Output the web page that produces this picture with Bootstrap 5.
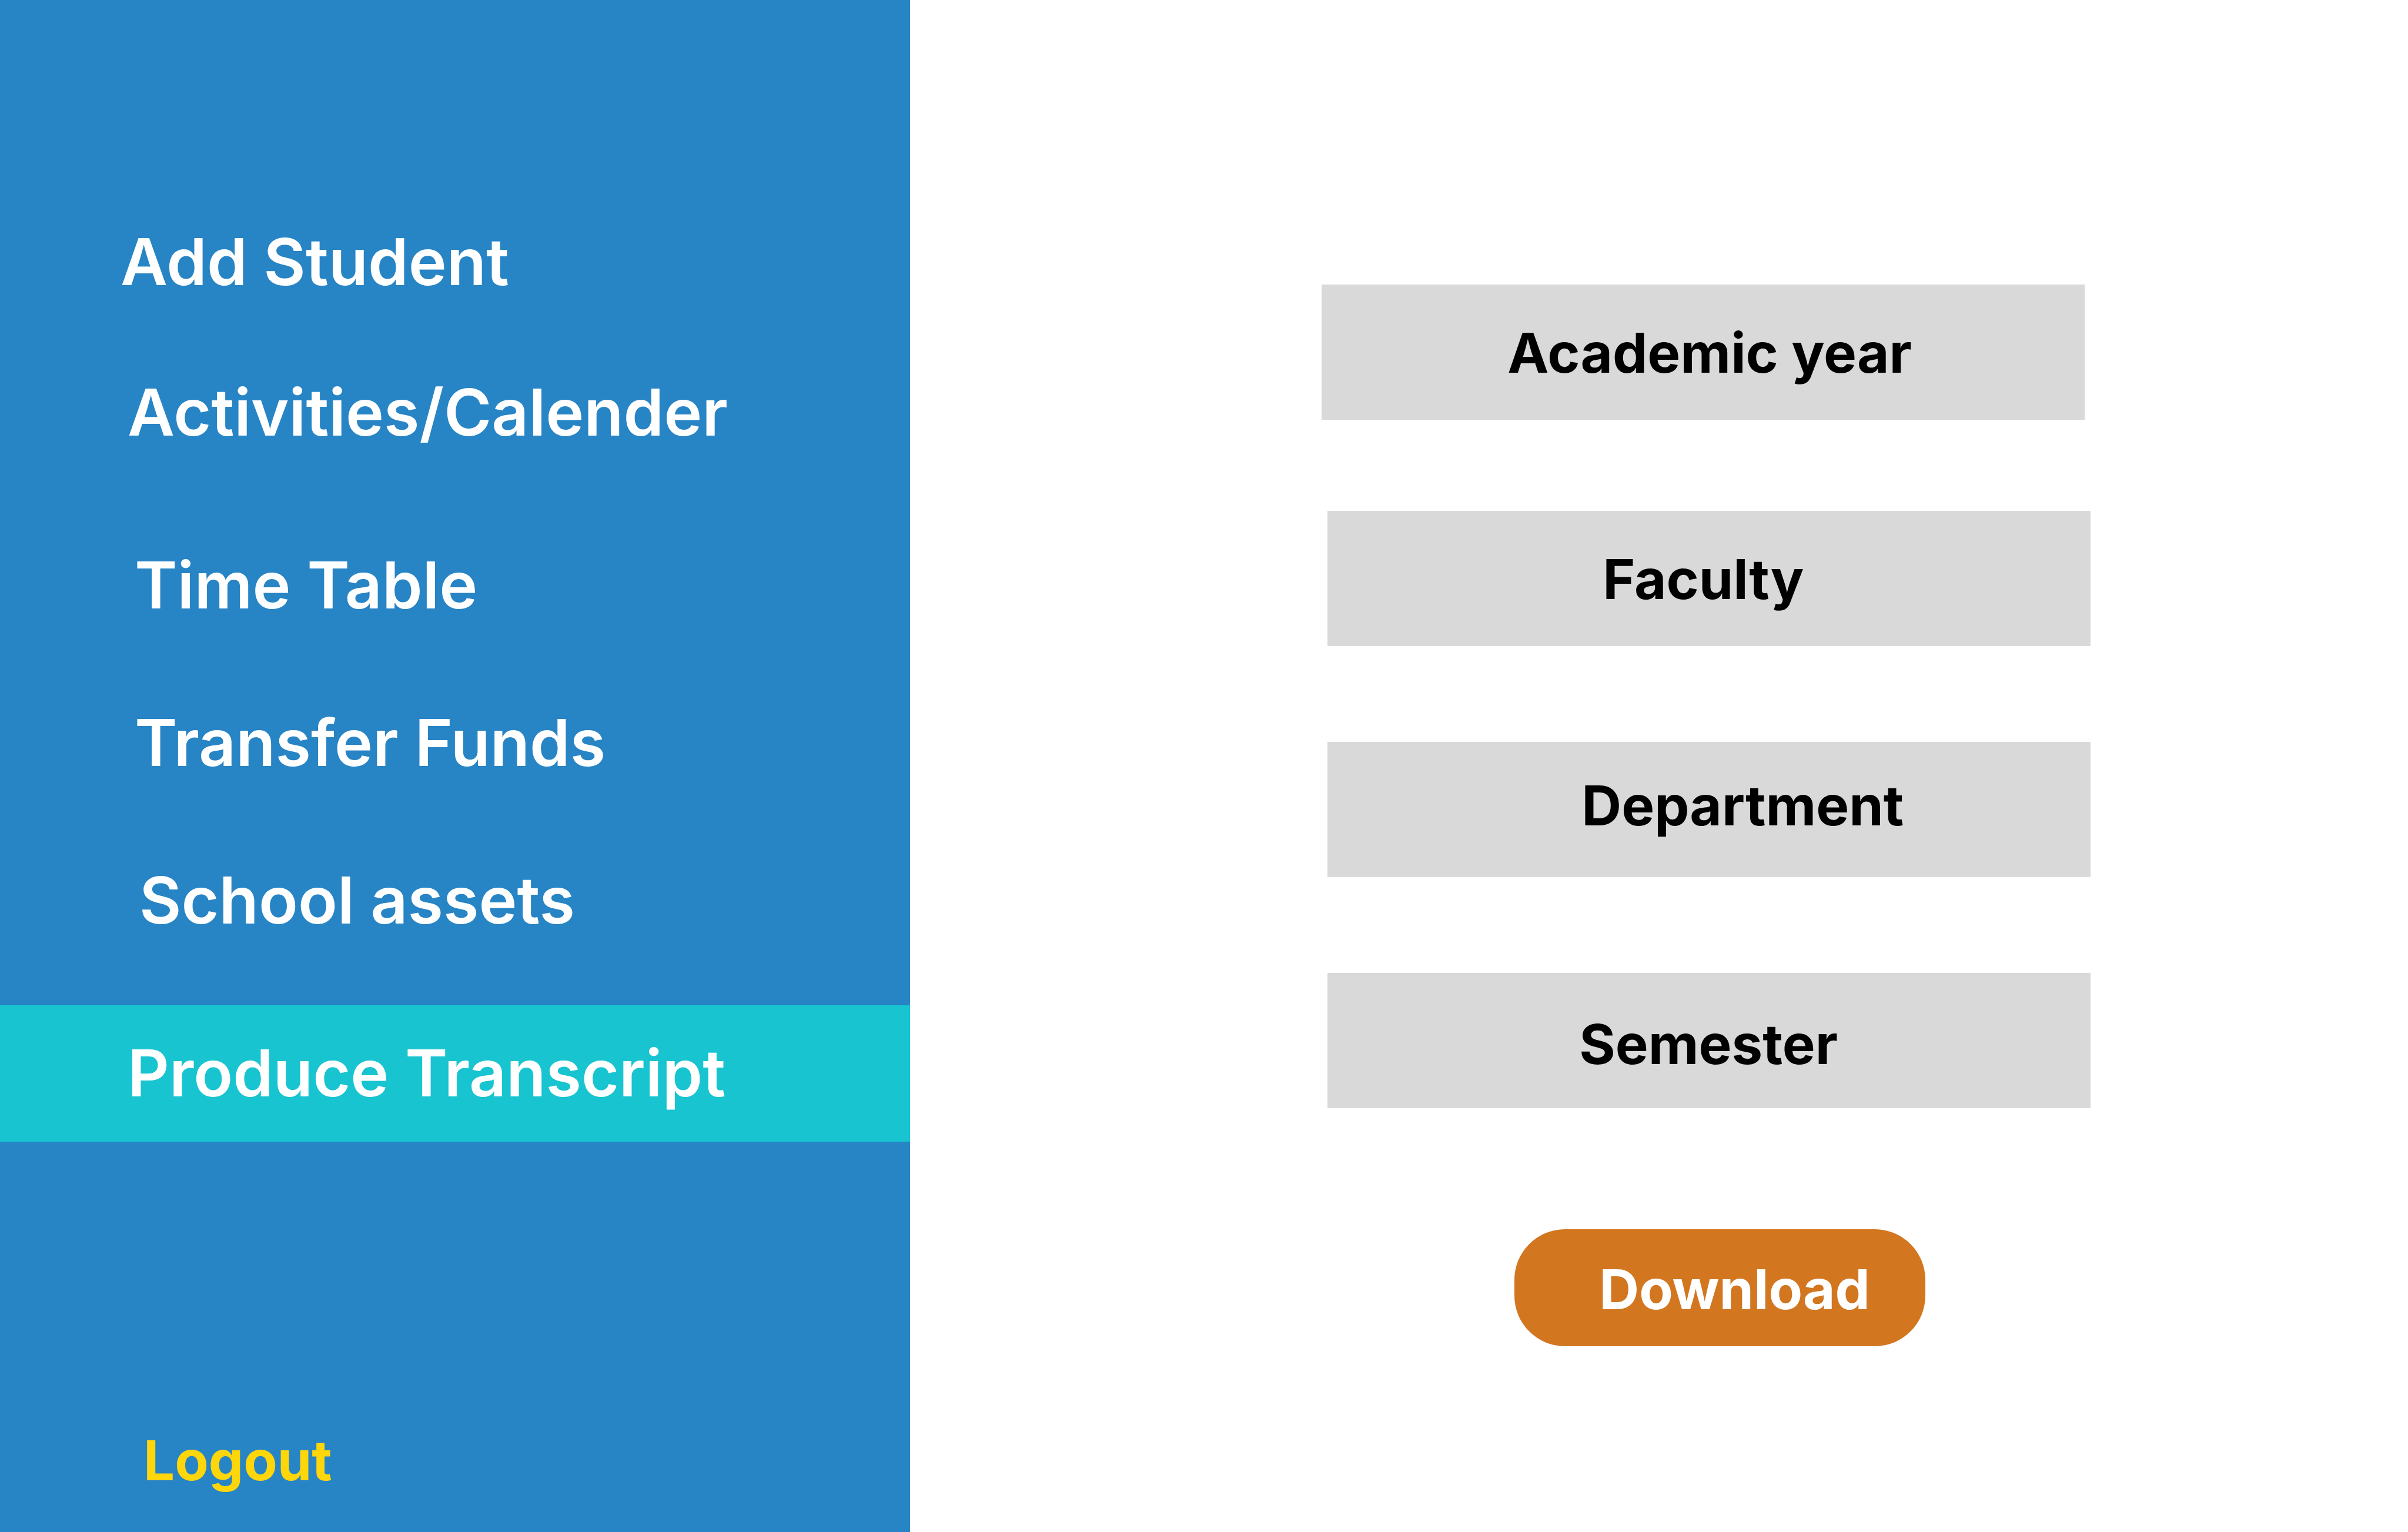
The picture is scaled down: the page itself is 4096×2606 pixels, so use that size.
<!DOCTYPE html>
<html lang="en">
<head>
<meta charset="utf-8">
<meta name="viewport" content="width=device-width, initial-scale=1">
<title>Produce Transcript</title>
<link href="https://cdn.jsdelivr.net/npm/bootstrap@5.3.0/dist/css/bootstrap.min.css" rel="stylesheet">
<style>
  body { font-family: Inter, "Liberation Sans", sans-serif; }

  .side-panel {
    flex: 0 0 37.8%;
    padding-top: 330px;
    padding-bottom: 65px;
    background: #2784c5;
  }
  .menu-groups { gap: 62px; }
  .menu-main { gap: 24px; }
  .menu-records { gap: 36px; }

  .menu-link {
    padding: 49px 24px 51px 217px;
    font-size: 110px;
    line-height: 132px;
    font-weight: 600;
    color: #fff;
  }
  .menu-link:hover, .menu-link:focus { color: #fff; }
  .menu-link.active { background: #17c4d0; }
  .indent-first { padding-left: 205px; }
  .indent-records { padding-left: 229px; }
  .indent-assets { padding-left: 237px; }
  .indent-logout { padding-left: 244px; }

  .logout-link, .field-btn, .download-btn {
    font-size: 94px;
    line-height: 114px;
    font-weight: 700;
  }
  .logout-link { color: #ffd60a; }

  .content-panel { padding: 484px 24px 24px 700px; }
  .transcript-form { max-width: 1308px; }
  .field-list { gap: 163px; }
  .field-first { margin-bottom: 155px; }

  .field-btn {
    --bs-btn-color: #000;
    --bs-btn-bg: #d9d9d9;
    --bs-btn-hover-bg: #cccccc;
    max-width: 1298px;
    padding: 59px 0 57px 428px;
    border: 0;
    border-radius: 0;
  }
  .field-year { padding-left: 316px; }
  .field-faculty { padding-left: 468px; }
  .field-department { padding: 51px 0 65px 432px; }
  .field-semester { padding-top: 64px; padding-bottom: 52px; }

  .download-btn {
    --bs-btn-color: #fff;
    --bs-btn-bg: #d27620;
    --bs-btn-hover-color: #fff;
    --bs-btn-hover-bg: #b9671b;
    width: 699px;
    margin: 206px 0 0 328px;
    padding: 45px 0 40px 144px;
    border: 0;
    border-radius: 86px;
  }
</style>
</head>
<body>
<div class="d-flex min-vh-100">
  <aside class="side-panel d-flex flex-column">
    <nav class="menu-groups d-flex flex-column" aria-label="Main menu">
      <div class="menu-main nav flex-column">
        <a class="menu-link indent-first nav-link" href="#">Add Student</a>
        <a class="menu-link nav-link" href="#">Activities/Calender</a>
      </div>
      <div class="menu-records nav flex-column">
        <a class="menu-link indent-records nav-link" href="#">Time Table</a>
        <a class="menu-link indent-records nav-link" href="#">Transfer Funds</a>
        <a class="menu-link indent-assets nav-link" href="#">School assets</a>
      </div>
      <div class="nav flex-column">
        <a class="menu-link nav-link active" href="#" aria-current="page">Produce Transcript</a>
      </div>
    </nav>
    <a class="logout-link indent-logout text-decoration-none mt-auto" href="#">Logout</a>
  </aside>

  <main class="content-panel flex-grow-1 bg-white">
    <form class="transcript-form d-flex flex-column">
      <button type="button" class="field-btn field-first field-year btn w-100 text-start">Academic year</button>
      <div class="field-list d-flex flex-column align-items-end">
        <button type="button" class="field-btn field-faculty btn w-100 text-start">Faculty</button>
        <button type="button" class="field-btn field-department btn w-100 text-start">Department</button>
        <button type="button" class="field-btn field-semester btn w-100 text-start">Semester</button>
      </div>
      <button type="submit" class="download-btn btn text-start">Download</button>
    </form>
  </main>
</div>
<script src="https://cdn.jsdelivr.net/npm/bootstrap@5.3.0/dist/js/bootstrap.bundle.min.js"></script>
</body>
</html>
